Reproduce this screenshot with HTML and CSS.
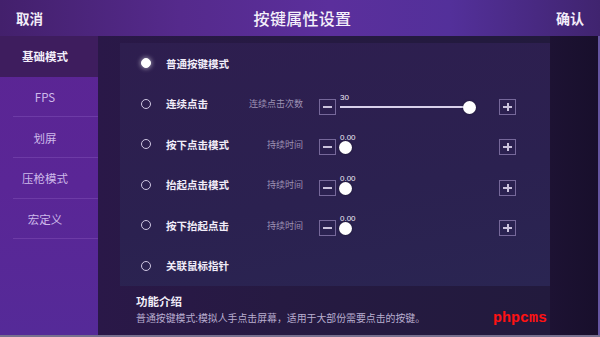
FILE: index.html
```html
<!DOCTYPE html>
<html lang="zh">
<head>
<meta charset="utf-8">
<title>按键属性设置</title>
<link rel="stylesheet" href="styles.css">
</head>
<body>
<div class="screen">
  <header class="header">
    <span class="hbtn">取消</span>
    <span class="title">按键属性设置</span>
    <span class="hbtn ok">确认</span>
  </header>
  <div class="body">
    <nav class="sidebar">
      <div class="item active">基础模式</div>
      <div class="item">FPS</div>
      <div class="item">划屏</div>
      <div class="item">压枪模式</div>
      <div class="item last">宏定义</div>
    </nav>
    <main class="main">
      <div class="content">
        <section class="panel">
          <div class="row">
            <span class="radio on"></span><span class="name">普通按键模式</span>
          </div>
          <div class="row">
            <span class="radio"></span><span class="name">连续点击</span>
            <div class="ctrl">
              <span class="sub">连续点击次数</span>
              <span class="box minus"></span>
              <div class="slider">
                <span class="val">30</span>
                <span class="fill" style="width:129px"></span>
                <span class="knob" style="left:127px"></span>
              </div>
              <span class="box plus"></span>
            </div>
          </div>
          <div class="row">
            <span class="radio"></span><span class="name">按下点击模式</span>
            <div class="ctrl">
              <span class="sub">持续时间</span>
              <span class="box minus"></span>
              <div class="slider">
                <span class="val">0.00</span>
                <span class="knob" style="left:3px"></span>
              </div>
              <span class="box plus"></span>
            </div>
          </div>
          <div class="row">
            <span class="radio"></span><span class="name">抬起点击模式</span>
            <div class="ctrl">
              <span class="sub">持续时间</span>
              <span class="box minus"></span>
              <div class="slider">
                <span class="val">0.00</span>
                <span class="knob" style="left:3px"></span>
              </div>
              <span class="box plus"></span>
            </div>
          </div>
          <div class="row">
            <span class="radio"></span><span class="name">按下抬起点击</span>
            <div class="ctrl">
              <span class="sub">持续时间</span>
              <span class="box minus"></span>
              <div class="slider">
                <span class="val">0.00</span>
                <span class="knob" style="left:3px"></span>
              </div>
              <span class="box plus"></span>
            </div>
          </div>
          <div class="row">
            <span class="radio"></span><span class="name">关联鼠标指针</span>
          </div>
        </section>
        <section class="intro">
          <div class="intro-title">功能介绍</div>
          <div class="intro-text">普通按键模式:模拟人手点击屏幕，适用于大部份需要点击的按键。</div>
        </section>
      </div>
      <div class="strip"></div>
    </main>
  </div>
  <span class="watermark">phpcms</span>
</div>
</body>
</html>
```

FILE: styles.css
```css
* { box-sizing: border-box; }
html, body { margin: 0; padding: 0; }
body {
  width: 600px;
  height: 337px;
  overflow: hidden;
  font-family: "Noto Sans CJK SC", "Noto Sans", sans-serif;
  background: #1e1533;
}
.screen {
  position: relative;
  width: 600px;
  height: 337px;
  display: flex;
  flex-direction: column;
  border-bottom: 2px solid #77708e;
}
.header {
  height: 36px;
  flex: 0 0 36px;
  display: flex;
  align-items: center;
  justify-content: space-between;
  padding: 0 16px 0 16px;
  background: linear-gradient(90deg, #43206c 0%, #552a8c 30%, #5b2f9c 55%, #53309a 75%, #40246f 100%);
  color: #fff;
  box-shadow: 0 1px 0 #2a1540;
}
.hbtn {
  font-size: 13.5px;
  font-weight: 700;
  line-height: 20px;
  color: #f2ecf8;
}
.hbtn.ok { font-size: 14px; }
.title {
  font-size: 16px;
  font-weight: 500;
  letter-spacing: 0.3px;
  color: #f4f0fa;
  margin-left: 6px;
}
.body {
  flex: 1;
  display: flex;
  min-height: 0;
}
.sidebar {
  width: 98px;
  flex: 0 0 98px;
  background: linear-gradient(180deg, #5b2594 0%, #5a2696 50%, #552a98 100%);
  display: flex;
  flex-direction: column;
}
.item {
  height: 40.7px;
  display: flex;
  align-items: center;
  justify-content: center;
  padding-right: 8px;
  font-size: 11.5px;
  color: #cdb9ea;
  position: relative;
}
.item::after {
  content: "";
  position: absolute;
  left: 13px;
  right: 0;
  bottom: 0;
  height: 1px;
  background: #6d3ba6;
}
.item.active {
  background: #3e1d5e;
  color: #f3eefa;
  font-weight: 700;
}
.item.active::after { display: none; }
.main {
  flex: 1;
  display: flex;
}
.content {
  width: 452px;
  flex: 0 0 452px;
  padding: 7px 0 0 22px;
  background: linear-gradient(90deg, #2a1848 0%, #261a42 40%, #221a3d 100%);
}
.strip {
  flex: 1;
  background: linear-gradient(90deg, #1d1233 0%, #180f2c 100%);
  border-right: 2px solid #6656a2;
}
.panel {
  width: 430px;
  height: 243px;
  background: linear-gradient(170deg, #2e1e4f 0%, #2b2150 60%, #2a2552 100%);
  display: flex;
  flex-direction: column;
}
.row {
  height: 40.7px;
  display: flex;
  align-items: center;
  padding: 0 0 0 21px;
}
.radio {
  width: 10px;
  height: 10px;
  border-radius: 50%;
  border: 1.5px solid #cfc6e2;
  flex: 0 0 10px;
}
.radio.on {
  background: #ffffff;
  border-color: #ffffff;
  box-shadow: 0 0 4px 1px rgba(255, 255, 255, 0.45);
}
.name {
  margin-left: 15px;
  flex: 0 0 54px;
  width: 54px;
  white-space: nowrap;
  overflow: visible;
  font-size: 10.5px;
  font-weight: 700;
  color: #f1ecf8;
}
.ctrl {
  flex: 0 0 296px;
  width: 296px;
  display: flex;
  align-items: center;
}
.sub {
  flex: 0 0 83px;
  width: 83px;
  text-align: right;
  font-size: 9px;
  color: #9d91b3;
  white-space: nowrap;
}
.box {
  flex: 0 0 17px;
  width: 17px;
  height: 16px;
  border: 1px solid #76689a;
  position: relative;
  margin-top: 6px;
}
.minus { margin-left: 16px; }
.box::before {
  content: "";
  position: absolute;
  left: 3px;
  right: 3px;
  top: 6px;
  height: 2px;
  background: #cbc3dc;
}
.plus::after {
  content: "";
  position: absolute;
  top: 3px;
  bottom: 3px;
  left: 6.5px;
  width: 2px;
  background: #cbc3dc;
}
.slider {
  flex: 0 0 163px;
  width: 163px;
  height: 16px;
  position: relative;
  margin-top: 6px;
}
.val {
  position: absolute;
  left: 4px;
  top: -6px;
  font-family: "Liberation Sans", Arial, sans-serif;
  font-size: 8px;
  line-height: 9px;
  color: #efe9f7;
}
.fill {
  position: absolute;
  left: 4px;
  top: 7px;
  height: 2px;
  background: #d8d0ea;
}
.knob {
  position: absolute;
  top: 2px;
  width: 13px;
  height: 13px;
  border-radius: 50%;
  background: #ffffff;
  box-shadow: 0 0 2px rgba(0, 0, 0, 0.5);
}
.intro {
  margin: 8px 0 0 16px;
}
.intro-title {
  font-size: 11.5px;
  font-weight: 700;
  line-height: 15px;
  color: #f2eef8;
}
.intro-text {
  margin-top: 3px;
  font-size: 9.9px;
  line-height: 13px;
  color: #b9aed0;
  white-space: nowrap;
}
.watermark {
  position: absolute;
  left: 493px;
  top: 310px;
  font-family: "Liberation Mono", monospace;
  font-weight: 700;
  font-size: 15px;
  line-height: 18px;
  color: #ff1212;
}
```
